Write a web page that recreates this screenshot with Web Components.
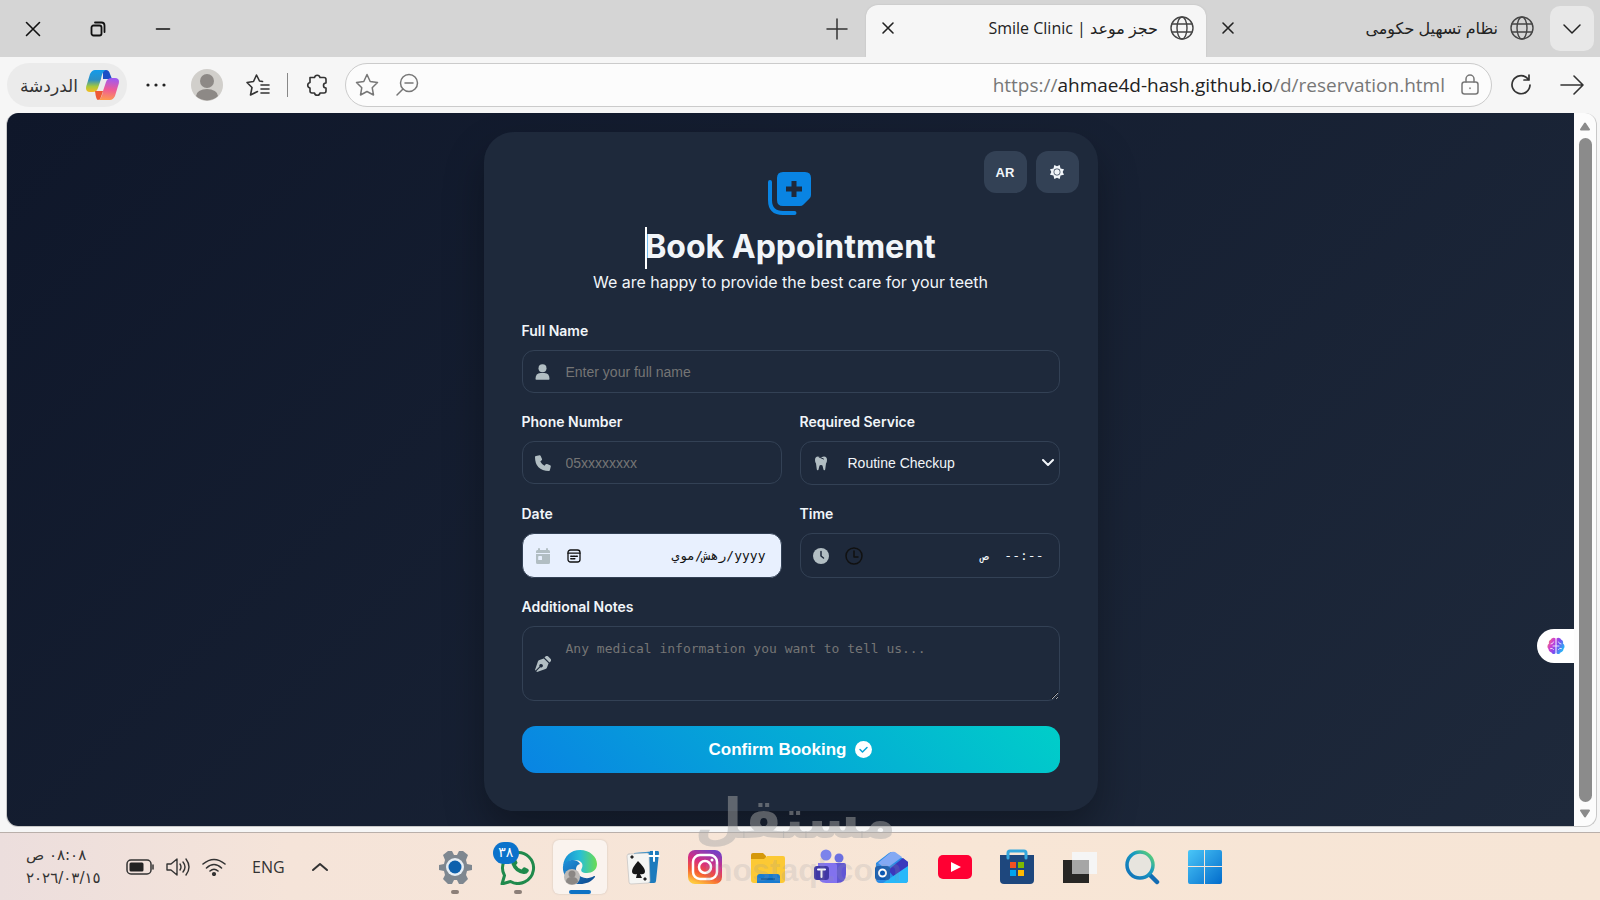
<!DOCTYPE html>
<html lang="ar">
<head>
<meta charset="utf-8">
<meta name="viewport" content="width=device-width, initial-scale=1">
<title>حجز موعد | Smile Clinic</title>
<style>
  body {
    margin: 0;
    min-height: 100vh;
    display: flex;
    flex-direction: column;
    background: #f6f6f6;
    color: #222;
    font-family: "Open Sans", "Noto Sans", "DejaVu Sans", sans-serif;
  }
</style>
</head>
<body>
<tab-strip>
  <browser-tab active>حجز موعد | Smile Clinic</browser-tab>
  <browser-tab>نظام تسهيل حكومى</browser-tab>
</tab-strip>
<address-toolbar></address-toolbar>
<page-viewport>
  <booking-card></booking-card>
</page-viewport>
<task-bar></task-bar>
<water-mark></water-mark>

<script>
function define(name, html) {
  const template = document.createElement("template");
  template.innerHTML = html;

  customElements.define(
    name,
    class extends HTMLElement {
      constructor() {
        super();
        this.attachShadow({ mode: "open" });
        this.shadowRoot.appendChild(template.content.cloneNode(true));
      }
    }
  );
}

const buttonReset = `
  * { box-sizing: border-box; }
  button {
    display: grid;
    place-items: center;
    padding: 0;
    border: 0;
    background: none;
    color: inherit;
    font: inherit;
  }
  svg {
    display: block;
    fill: none;
    stroke: currentColor;
    stroke-linecap: round;
    stroke-linejoin: round;
  }
`;

define("browser-tab", `
  <style>
    ${buttonReset}
    :host {
      display: flex;
      align-items: center;
      gap: 12px;
      width: 340px;
      height: 52px;
      padding: 0 12px 6px 12px;
      box-sizing: border-box;
      border-radius: 12px 12px 0 0;
      font-size: 16px;
      direction: ltr;
    }
    :host([active]) {
      background: #f6f6f6;
      box-shadow: 0 0 2px #bbb;
    }
    .title {
      flex: 1;
      direction: rtl;
      white-space: nowrap;
      overflow: hidden;
    }
  </style>
  <button aria-label="Close tab">
    <svg width="20" height="20" viewBox="0 0 20 20" stroke-width="1.6"><path d="M5 5l10 10M15 5L5 15"/></svg>
  </button>
  <span class="title"><slot></slot></span>
  <svg width="24" height="24" viewBox="0 0 24 24" stroke="#444" style="stroke:#444" stroke-width="1.4"><circle cx="12" cy="12" r="11"/><ellipse cx="12" cy="12" rx="5" ry="11"/><path d="M2 8h20M2 16h20"/></svg>
`);

define("tab-strip", `
  <style>
    ${buttonReset}
    :host {
      display: flex;
      align-items: flex-end;
      height: 57px;
      padding-right: 6px;
      box-sizing: border-box;
      background: #d5d5d5;
    }
    .window, .add { height: 57px; color: #111; }
    .window { width: 65px; }
    .spacer { flex: 1; }
    .add { width: 58px; color: #333; }
    .more {
      align-self: center;
      width: 44px;
      height: 45px;
      margin-left: 4px;
      border-radius: 10px;
      background: #e8e8e8;
    }
  </style>
  <button class="window" aria-label="Close"><svg width="16" height="16" viewBox="0 0 16 16" stroke-width="1.6"><path d="M1.5 1.5l13 13M14.5 1.5l-13 13"/></svg></button>
  <button class="window" aria-label="Restore"><svg width="16" height="16" viewBox="0 0 16 16" stroke-width="1.8"><rect x="1.5" y="4.500" width="10" height="10" rx="2"/><path d="M5 1.500h6.500a3 3 0 0 1 3 3V11"/></svg></button>
  <button class="window" aria-label="Minimize"><svg width="16" height="16" viewBox="0 0 16 16" stroke-width="1.6"><path d="M1.500 8h13"/></svg></button>
  <span class="spacer"></span>
  <button class="add" aria-label="New tab"><svg width="22" height="22" viewBox="0 0 22 22" stroke-width="1.500"><path d="M11 1v20M1 11h20"/></svg></button>
  <slot></slot>
  <button class="more" aria-label="Tab list"><svg width="20" height="20" viewBox="0 0 20 20" stroke-width="1.500"><path d="M2 6l8 8 8-8"/></svg></button>
`);

define("address-toolbar", `
  <style>
    ${buttonReset}
    :host {
      display: flex;
      align-items: center;
      height: 56px;
      padding: 0 5px 0 7px;
      box-sizing: border-box;
      background: #f6f6f6;
      color: #333;
    }
    .chat {
      display: flex;
      align-items: center;
      justify-content: space-between;
      width: 120px;
      height: 44px;
      padding: 0 8px 0 13px;
      border-radius: 22px;
      background: #ebebeb;
      font-size: 17px;
    }
    .tool { width: 58px; height: 44px; }
    .avatar { width: 44px; }
    .divider { width: 1px; height: 24px; background: #888; }
    .divider + .tool { width: 57px; }
    .address {
      flex: 1;
      display: flex;
      align-items: center;
      gap: 16px;
      height: 44px;
      padding: 0 12px 0 9px;
      border: 1px solid #cbcbcb;
      border-radius: 22px;
      background: #fcfcfc;
      color: #777;
    }
    .url {
      flex: 1;
      color: #777;
      font-size: 19px;
      text-align: right;
      text-decoration: none;
      white-space: nowrap;
    }
    .url b { color: #222; font-weight: 400; }
    .nav { width: 57px; height: 44px; }
    .nav:last-child { width: 46px; }
  </style>
  <button class="chat">الدردشة
    <svg width="33" height="30" viewBox="0 0 33 30" style="stroke:none">
      <defs>
        <linearGradient id="cool" x1="0" y1="0" x2="0" y2="1"><stop offset="0" stop-color="#139bea"/><stop offset=".45" stop-color="#2c8fc4"/><stop offset=".75" stop-color="#a6c83c"/><stop offset="1" stop-color="#f7bd22"/></linearGradient>
        <linearGradient id="warm" x1=".3" y1="0" x2=".2" y2="1"><stop offset="0" stop-color="#a05af0"/><stop offset=".5" stop-color="#ef5b96"/><stop offset="1" stop-color="#ff9e4d"/></linearGradient>
      </defs>
      <path d="M17 0h3q3 0 4 4l2 5h-9z" fill="#1b4fc6"/>
      <path d="M9 0h11c-3 1-4 4-5 9l-3 9c-1 3-3 4-5 4H4c-4 0-5-3-3-8L4 4q2-4 5-4z" fill="url(#cool)"/>
      <path d="M24 30H12c3-1 4-4 5-9l3-9c1-3 3-4 6-4h3c4 0 5 3 3 8l-3 10q-2 4-5 4z" fill="url(#warm)"/>
      <path d="M9 21h8l-2 6q-1 3-3 3t-3-9z" fill="#ee5a35"/>
    </svg>
  </button>
  <button class="tool" aria-label="Menu"><svg width="20" height="6" viewBox="0 0 20 6" style="fill:#222;stroke:none"><circle cx="2" cy="3" r="1.600"/><circle cx="10" cy="3" r="1.600"/><circle cx="18" cy="3" r="1.600"/></svg></button>
  <button class="tool avatar" aria-label="Profile">
    <svg width="32" height="32" viewBox="0 0 32 32" style="stroke:none"><circle cx="16" cy="16" r="16" fill="#d1cfcb"/><circle cx="16" cy="12" r="7" fill="#8d8986"/><path d="M5 27a11 7 0 0 1 22 0 16 16 0 0 1-22 0z" fill="#8d8986"/></svg>
  </button>
  <button class="tool" aria-label="Favorites"><svg width="24" height="24" viewBox="0 0 24 24" stroke-width="1.600"><path d="M13.500 8L10.500 2 7.500 8.500 1 9.500l5 5-1.500 7.500 6-3 1-.5M13.500 8l3 .5M15 12h8M15 16h8M15 20h8"/></svg></button>
  <span class="divider"></span>
  <button class="tool" aria-label="Extensions"><svg width="24" height="24" viewBox="0 0 24 24" stroke-width="1.600"><path d="M5 4.500h4.500a2.800 2.800 0 0 1 5.500 0H19q2 0 2 2V10a2.300 2.300 0 1 0 0 5v3q0 2-2 2h-4a2.800 2.800 0 0 1-5.500 0H7q-2 0-2-2v-3a2.800 2.800 0 0 1 0-5.500z"/></svg></button>
  <div class="address">
    <button aria-label="Add to favorites"><svg width="24" height="24" viewBox="0 0 24 24" stroke-width="1.500"><path d="M12 1.500l3.200 7 7.300 1-5.300 5.200 1.300 7.300-6.500-3.500L5.500 22l1.300-7.300L1.500 9.500l7.300-1z"/></svg></button>
    <button aria-label="Zoom"><svg width="24" height="24" viewBox="0 0 24 24" stroke-width="1.500"><circle cx="14" cy="10" r="8.500"/><path d="M8 16l-6 6M10 10h8"/></svg></button>
    <a class="url" href="#" dir="ltr">https://<b>ahmae4d-hash.github.io</b>/d/reservation.html</a>
    <svg width="18" height="22" viewBox="0 0 18 22" stroke-width="1.500"><rect x="1" y="8" width="16" height="12" rx="2.500"/><path d="M5 8V5a4 4 0 0 1 8 0v3M9 14v.5"/></svg>
  </div>
  <button class="nav" aria-label="Reload"><svg width="22" height="22" viewBox="0 0 22 22" stroke-width="1.700"><path d="M20 11a9 9 0 1 1-3-7l2 2M19 1v5h-5"/></svg></button>
  <button class="nav" aria-label="Go"><svg width="24" height="24" viewBox="0 0 24 24" stroke-width="1.600"><path d="M1 12h22M14 3l9 9-9 9"/></svg></button>
`);

define("page-viewport", `
  <style>
    ${buttonReset}
    :host {
      flex: 1;
      display: flex;
      margin: 0 3px 5px 6px;
      box-sizing: border-box;
      border: 1px solid #c8c8c8;
      border-width: 0 1px 1px 1px;
      border-radius: 12px;
      overflow: hidden;
      background: #fcfcfc;
    }
    .page {
      flex: 1;
      position: relative;
      padding: 19px 0 14px;
      background: linear-gradient(135deg, #0f172a, #1e293b);
    }
    .assistant {
      position: absolute;
      right: 0;
      bottom: 163px;
      width: 37px;
      height: 34px;
      border-radius: 17px 0 0 17px;
      background: #fff;
    }
    .scrollbar {
      display: flex;
      flex-direction: column;
      align-items: center;
      gap: 7px;
      width: 22px;
      padding: 9px 0 8px;
    }
    .thumb { flex: 1; width: 13px; border-radius: 7px; background: #8b8b8b; }
  </style>
  <div class="page">
    <slot></slot>
    <button class="assistant" aria-label="Assistant">
      <svg width="18" height="18" viewBox="0 0 18 18">
        <defs><linearGradient id="b" x1="0" y1="0" x2="1" y2=".5"><stop offset="0" stop-color="#f59052"/><stop offset=".35" stop-color="#d13ed0"/><stop offset=".65" stop-color="#7a4df0"/><stop offset="1" stop-color="#29b1f5"/></linearGradient></defs>
        <path fill="url(#b)" stroke="none" d="M8.500 1.500C7 0 4.500 1 4 2.500 2 3 1.500 5 2 6.500 0 8 0 10.500 1.500 12 1.500 14 3 15 4.500 15.500 5.500 17.500 8 17.500 8.500 16zM9.500 1.500C11 0 13.500 1 14 2.500c2 .5 2.500 2.500 2 4 2 1.500 2 4 .5 5.500 0 2-1.500 3-3 3.500-1 2-3.500 2-4 .5z"/>
        <path stroke="#fff" style="stroke:#fff" stroke-width=".8" d="M4 7q2 0 2.500-2M3.500 11.500q2-1 3 1M6 9h2.500M14 7q-2 0-2.500-2M14.500 11.500q-2-1-3 1M12 9H9.500"/>
      </svg>
    </button>
  </div>
  <div class="scrollbar">
    <svg width="12" height="9" viewBox="0 0 12 9"><path d="M6 1.500l4 6H2z" fill="#8b8b8b" stroke="#8b8b8b" stroke-width="2"/></svg>
    <span class="thumb"></span>
    <svg width="12" height="9" viewBox="0 0 12 9"><path d="M6 7.500l4-6H2z" fill="#8b8b8b" stroke="#8b8b8b" stroke-width="2"/></svg>
  </div>
`);

define("form-field", `
  <style>
    :host { display: block; }
    .label { display: block; margin-bottom: 9px; }
    .box { position: relative; display: grid; }
    .icon, .end {
      position: absolute;
      top: 0;
      bottom: 0;
      display: grid;
      align-items: center;
      pointer-events: none;
    }
    .icon { left: 13px; color: #b2bec3; }
    .end { right: 6px; color: #f1f5f9; }
  </style>
  <div class="label"><slot name="label"></slot></div>
  <div class="box">
    <slot></slot>
    <span class="icon"><slot name="icon"></slot></span>
    <span class="end"><slot name="end"></slot></span>
  </div>
`);

define("booking-card", `
  <style>
    ${buttonReset}
    :host {
      display: block;
      position: relative;
      width: 614px;
      max-width: 100%;
      margin: 0 auto;
      padding: 38px;
      box-sizing: border-box;
      border-radius: 30px;
      background: #1e293b;
      box-shadow: 0 20px 40px rgba(0, 0, 0, .3);
      color: #f1f5f9;
      font-family: Inter, sans-serif;
    }
    .controls { position: absolute; top: 19px; right: 19px; display: flex; gap: 9px; }
    .controls button {
      width: 43px;
      height: 42px;
      border-radius: 12px;
      background: #334155;
      font: bold 13px "Liberation Sans", sans-serif;
    }
    header { display: flex; flex-direction: column; align-items: center; margin-bottom: 26px; }
    h1 { position: relative; margin: 10px 0 0; font-size: 32px; line-height: 44px; font-weight: 700; }
    .caret { position: absolute; left: 0; top: 2px; width: 2px; height: 42px; background: #fff; }
    p { margin: 0; font-size: 16px; line-height: 26px; }
    form { display: grid; grid-template-columns: 1fr 1fr; gap: 19px 18px; }
    .wide { grid-column: 1 / -1; }
    label { display: block; font-size: 14px; line-height: 20px; font-weight: 600; }
    input, select, textarea {
      width: 100%;
      height: 43px;
      margin: 0;
      padding: 0 16px 0 43px;
      border: 1px solid #334155;
      border-radius: 12px;
      background: transparent;
      color: #f1f5f9;
      font: 14px "Liberation Sans", sans-serif;
      outline: 0;
    }
    select { height: 44px; appearance: none; padding-left: 47px; }
    option { background: #1e293b; }
    input[dir] { height: 45px; padding: 0 15px; font: 13px "DejaVu Sans Mono", "DejaVu Sans", monospace; }
    #date { background: #e8f0fe; color: #111; }
    ::placeholder { color: #757575; opacity: 1; }
    textarea {
      display: block;
      height: 75px;
      padding-top: 14px;
      font: 13px "DejaVu Sans Mono", monospace;
      resize: vertical;
    }
    svg { fill: currentColor; stroke: none; }
    .pair { display: flex; align-items: center; gap: 16px; }
    .picker { fill: none; stroke: #111; stroke-width: 1.500; }
    .submit {
      display: flex;
      align-items: center;
      justify-content: center;
      gap: 9px;
      height: 47px;
      margin-top: 6px;
      border-radius: 14px;
      background: linear-gradient(45deg, #0984e3, #00cec9);
      color: #fff;
      font: bold 17px "Liberation Sans", sans-serif;
    }
  </style>
  <div class="controls">
    <button>AR</button>
    <button aria-label="Theme"><svg width="14" height="14" viewBox="0 0 14 14"><path fill-rule="evenodd" d="M4.300 0L7 1.300 9.700 0l.8 3.500L14 4.300 12.700 7 14 9.700l-3.500.8-.8 3.500L7 12.700 4.300 14l-.8-3.500L0 9.700 1.300 7 0 4.300l3.500-.8zM7 3.600a3.400 3.400 0 1 0 0 6.800 3.400 3.400 0 0 0 0-6.800z"/><circle cx="7" cy="7" r="2.700"/></svg></button>
  </div>
  <header>
    <svg width="46" height="45" viewBox="0 0 46 45" color="#0984e3">
      <path fill-rule="evenodd" d="M15 2h22q6 0 6 6v17q0 2-1.500 3.500l-6 6Q34 36 32 36H15q-6 0-6-6V8q0-6 6-6zm8.500 9v5.500H18v5h5.500V27h5v-5.500H34v-5h-5.500V11z"/>
      <path d="M2 12v18q0 13 13 13h11.500" style="fill:none;stroke:#0984e3;stroke-width:4;stroke-linecap:round"/>
    </svg>
    <h1><span class="caret"></span>Book Appointment</h1>
    <p>We are happy to provide the best care for your teeth</p>
  </header>
  <form>
    <form-field class="wide">
      <label slot="label" for="name">Full Name</label>
      <input id="name" type="text" placeholder="Enter your full name">
      <svg slot="icon" width="15" height="16" viewBox="0 0 15 16"><circle cx="7.500" cy="4.200" r="4"/><path d="M.5 15q0-6 5-6h4q5 0 5 6 0 .8-.8.800H1.300Q.5 15.800.5 15z"/></svg>
    </form-field>
    <form-field>
      <label slot="label" for="phone">Phone Number</label>
      <input id="phone" type="tel" placeholder="05xxxxxxxx">
      <svg slot="icon" width="16" height="16" viewBox="0 0 16 16"><path d="M4.500.2q.8-.2 1.200.7l1.300 3q.3.800-.3 1.400L5.300 6.500q1.400 2.800 4.200 4.200l1.200-1.400q.6-.6 1.400-.3l3 1.300q.9.400.7 1.200L15 14.700Q14.700 16 14 16 0 15.500 0 2q0-.8 1-1z"/></svg>
    </form-field>
    <form-field>
      <label slot="label" for="service">Required Service</label>
      <select id="service"><option>Routine Checkup</option></select>
      <svg slot="icon" width="16" height="16" viewBox="0 0 16 16"><path d="M5 1.500q1 0 3 1 2-1 3-1 3 0 3 3.500 0 2-1 3.500l-.8 6q-.2 1-1 .8-.7 0-.8-1l-.8-3.300Q9.500 10 8 10q-1.500 0-1.600 1l-.8 3.300q-.1 1-.8 1-.8.200-1-.8L3 8.500Q2 7 2 5q0-3.500 3-3.500z"/><path d="M6 2l4.500 2" style="stroke:#1e293b"/></svg>
      <svg slot="end" width="12" height="8" viewBox="0 0 12 8"><path d="M1 1l5 5 5-5" style="fill:none;stroke:currentColor;stroke-width:2"/></svg>
    </form-field>
    <form-field>
      <label slot="label" for="date">Date</label>
      <input id="date" type="text" dir="rtl" value="yyyy/رهش/موي">
      <span slot="icon" class="pair">
        <svg width="16" height="16" viewBox="0 0 16 16"><path d="M4 0q1 0 1 1v1h6V1q0-1 1-1t1 1v1h.5Q15 2 15 3.500V5H1V3.500Q1 2 2.500 2H3V1q0-1 1-1zM1 6h14v8.500q0 1.500-1.500 1.500h-11Q1 16 1 14.500zm3 2q-.8 0-.8 1v2.500q0 .5.800.5h2.500q.5 0 .5-.5V9q0-1-.5-1z" fill-rule="evenodd"/></svg>
        <svg class="picker" width="14" height="14" viewBox="0 0 14 14"><rect x="1" y="1" width="12" height="12" rx="2.500" stroke-width="1.300"/><path d="M1 4.200h12" stroke-width="1.200"/><path d="M3.800 7.300h1.500M6.300 7.300h1.500M8.800 7.300h1.500M3.800 9.800h1.500M6.300 9.800h1.500"/></svg>
      </span>
    </form-field>
    <form-field>
      <label slot="label" for="time">Time</label>
      <input id="time" type="text" dir="rtl" value="--:--  ص">
      <span slot="icon" class="pair">
        <svg width="16" height="16" viewBox="0 0 16 16"><circle cx="8" cy="8" r="8"/><path d="M8 3.500V8l2.500 2" style="fill:none;stroke:#1e293b;stroke-width:1.500"/></svg>
        <svg class="picker" width="18" height="18" viewBox="0 0 18 18"><circle cx="9" cy="9" r="8"/><path d="M9 4v6h4"/></svg>
      </span>
    </form-field>
    <form-field class="wide">
      <label slot="label" for="notes">Additional Notes</label>
      <textarea id="notes" placeholder="Any medical information you want to tell us..."></textarea>
      <svg slot="icon" width="16" height="16" viewBox="0 0 16 16"><path fill-rule="evenodd" d="M11 0q1-.5 2 .3L15.700 3q.8 1 .3 2l-1.500 1.500-5-5zM8.800 2.400l4.800 4.800L12 11.500q-.4 1.200-1.500 1.600L2 16l-.7-.7 4-4a1.800 1.800 0 1 0-.8-.8l-4 4L0 14l2.900-8.500Q3.300 4.400 4.500 4z"/></svg>
    </form-field>
    <button class="submit wide">Confirm Booking
      <svg width="17" height="17" viewBox="0 0 17 17"><circle cx="8.500" cy="8.500" r="8.500"/><path d="M5 8.500l2.500 2.500L12 6.500" style="fill:none;stroke:#06a5d8;stroke-width:1.500"/></svg>
    </button>
  </form>
`);

define("task-app", `
  <style>
    ${buttonReset}
    :host { display: grid; justify-items: center; }
    button { position: relative; width: 54px; height: 54px; border-radius: 6px; }
    :host([active]) button { background: #faf3ee; box-shadow: 0 0 2px #cbbdb4; }
    :host([running]) button::after {
      content: "";
      position: absolute;
      bottom: 0;
      width: 8px;
      height: 4px;
      border-radius: 2px;
      background: #8c7f78;
    }
    :host([active]) button::after { width: 22px; background: #0f72c4; }
    ::slotted(svg) { display: block; width: 36px; height: 36px; }
    ::slotted(.badge) {
      position: absolute;
      left: 2px;
      top: 2px;
      width: 26px;
      height: 22px;
      border-radius: 11px;
      background: #0b72cb;
      color: #fff;
      font-size: 14px;
      line-height: 20px;
      text-align: center;
    }
  </style>
  <button><slot></slot></button>
`);

define("task-bar", `
  <style>
    ${buttonReset}
    :host {
      display: flex;
      align-items: center;
      height: 68px;
      box-sizing: border-box;
      border-top: 1px solid #b9afaa;
      background: linear-gradient(90deg, #ecdedd, #f5e4d9 18%, #f8e6d6 60%, #f6e5d6);
      color: #333;
    }
    .tray { display: flex; align-items: center; width: 424px; padding-left: 26px; }
    .clock { width: 100px; font: 15px/23px "DejaVu Sans", sans-serif; white-space: nowrap; }
    .clock span { display: block; width: max-content; }
    .status { display: flex; align-items: center; gap: 12px; }
    .lang { margin: 0 26px; font-size: 16px; }
    nav { display: grid; grid-template-columns: repeat(13, 1fr); width: 812px; }
    nav svg { stroke: none; }
  </style>
  <div class="tray">
    <div class="clock"><span dir="rtl">٠٨:٠٨ ص</span><span dir="ltr">٢٠٢٦/٠٣/١٥</span></div>
    <div class="status">
      <svg width="28" height="16" viewBox="0 0 28 16" stroke-width="1.500"><rect x="1" y="1" width="24" height="14" rx="4"/><rect x="3.500" y="3.500" width="14" height="9" rx="1.500" style="fill:#222;stroke:none"/><path d="M27 6v4"/></svg>
      <svg width="24" height="20" viewBox="0 0 24 20" stroke-width="1.400"><path d="M1 7v6h4l6 5V2L5 7zM14 7q2 3 0 6M17 5q4 5 0 10M20 2q6 8 0 16"/></svg>
      <svg width="24" height="18" viewBox="0 0 24 18" stroke-width="1.600"><path d="M1 6q11-9 22 0M4.500 10q7.500-7 15 0M8 13q4-3.500 8 0"/><circle cx="12" cy="16" r="1.300" fill="#333"/></svg>
    </div>
    <span class="lang">ENG</span>
    <button aria-label="Show hidden icons"><svg width="18" height="10" viewBox="0 0 18 10" stroke-width="2"><path d="M2 8l7-6 7 6"/></svg></button>
  </div>
  <nav>
    <task-app running>
      <svg viewBox="0 0 36 36"><path d="M11 2h4l2 4h3l2-4h4l5 4-2 5 1 4 5 1v5l-5 1-1 4 2 4-5 5h-4l-2-4h-3l-2 4h-4l-5-5 2-4-1-4-5-1v-5l5-1 1-4-2-5z" fill="#7e8790"/><circle cx="18" cy="18" r="9" fill="#e7eef4"/><circle cx="18" cy="18" r="6.500" fill="#0e61ad"/></svg>
    </task-app>
    <task-app running>
      <svg viewBox="0 0 36 36"><path d="M2 35l2.500-8.500a15.500 15.500 0 1 1 6 6z" fill="#f7e9dd" stroke="#1f8a4c" stroke-width="3"/><path d="M13 10q1.500-1.500 3 .5l1.500 3q0 1-1.500 2.500 1.500 3 5.500 4.500l2-2q.8-.5 1.600 0l3 1.500q1.400 1 .4 2.500-1.800 3-5 2.500-9-1.500-12-10-.6-3 1.500-5z" fill="#1f8a4c"/></svg>
      <span class="badge">٣٨</span>
    </task-app>
    <task-app active running>
      <svg viewBox="0 0 36 36">
        <defs><linearGradient id="e1"><stop stop-color="#168bd4"/><stop offset=".5" stop-color="#28bfd6"/><stop offset="1" stop-color="#6bdc51"/></linearGradient><linearGradient id="e2" x2="1" y2="1"><stop stop-color="#1f92dc"/><stop offset="1" stop-color="#0e478c"/></linearGradient></defs>
        <path d="M1 17C2 7 9 1 18 1c10 0 17 7 17 14 0 6-5 9-10 9-5 0-7-2-5-5 2-5-2-8-7-8-6 0-10 3-12 6z" fill="url(#e1)"/>
        <path d="M1 17c3-7 14-8 17-2-4 1-5 5-3 9 3 5 11 7 17 3 1 0 1 0 1 1-4 5-9 7-15 7C8 35 0 27 1 17z" fill="url(#e2)"/>
        <circle cx="10" cy="28" r="8" fill="#bdbab7"/><circle cx="10" cy="25" r="3.500" fill="#8b8784"/><path d="M4 33q0-5 6-5t6 5q-6 5-12 0z" fill="#8b8784"/>
      </svg>
    </task-app>
    <task-app>
      <svg viewBox="0 0 36 36"><path d="M9 4l23-2-4 32-18-2z" fill="#2388ca"/><path d="M25 2h8q1 0 1 2l-3 28q0 2-2 2h-6z" fill="#1d7bbd"/><path d="M4 5l18-1q2 0 2 2l1 26q0 2-2 2L6 35q-2 0-2-2L2 7q0-2 2-2z" fill="#f5f5f3" stroke="#bbb" stroke-width=".6"/><path d="M13 12q7 7 7 10 0 4-5 3l2 4h-6l1-4q-5 1-5-3 0-3 6-10z" fill="#161616"/><path d="M5 8l2-2 2 2-2 2zM18 30l2-2 2 2-2 2z" fill="#222"/><path d="M29 2v10M24 7h10" stroke="#fff" stroke-width="2"/></svg>
    </task-app>
    <task-app>
      <svg viewBox="0 0 36 36"><defs><linearGradient id="ig" x1=".3" y1="1" x2=".7" y2="0"><stop stop-color="#ffc83d"/><stop offset=".3" stop-color="#f55a31"/><stop offset=".6" stop-color="#d62d82"/><stop offset="1" stop-color="#7440c5"/></linearGradient></defs><rect x="1" y="1" width="34" height="34" rx="7" fill="url(#ig)"/><rect x="6" y="6" width="24" height="24" rx="7" fill="none" stroke="#fff" stroke-width="2.500"/><circle cx="18" cy="18" r="6" fill="none" stroke="#fff" stroke-width="2.500"/><circle cx="25" cy="11" r="1.500" fill="#fff"/></svg>
    </task-app>
    <task-app>
      <svg viewBox="0 0 36 36"><path d="M1 6q0-2 2-2h10l3 3v6H1z" fill="#d5980b"/><path d="M1 10h13l3-3h16q2 0 2 2v22q0 3-3 3H4q-3 0-3-3z" fill="#fcc934"/><path d="M7 34v-6q0-3 3-3h17q3 0 3 3v6z" fill="#187bd0"/><path d="M11 29h14v2H11z" fill="#0b5fa9"/></svg>
    </task-app>
    <task-app>
      <svg viewBox="0 0 36 36"><circle cx="14" cy="6" r="5.500" fill="#7b83eb"/><circle cx="27" cy="9" r="4.500" fill="#6b6fe0"/><path d="M20 14h12q2 0 2 2v9q0 9-9 9z" fill="#6156d4"/><path d="M6 14h16q3 0 3 3v17H14q-8 0-8-9z" fill="#8272ee"/><rect x="2" y="17" width="15" height="14" rx="3" fill="#3f37a5"/><path d="M6 20.500h7M9.500 20.500V28" stroke="#fff" stroke-width="2"/></svg>
    </task-app>
    <task-app>
      <svg viewBox="0 0 36 36"><path d="M2 14L15 4q3-2 6 0l13 9v18q0 3-3 3H6q-4 0-4-4z" fill="#278be7"/><path d="M4 14L16 4q2-2 5-1l7 5-16 12z" fill="#83a9f4"/><path d="M14 21l15-12 5 4v5L20 28z" fill="#3b38bd"/><path d="M34 17v14q0 3-3 3H9z" fill="#27b8fa"/><rect x="1" y="17" width="15" height="14" rx="3" fill="#0b58b2"/><circle cx="8.500" cy="24" r="3.500" fill="none" stroke="#fff" stroke-width="2"/></svg>
    </task-app>
    <task-app>
      <svg viewBox="0 0 36 36"><rect x="1" y="6" width="34" height="24" rx="5" fill="#ff0033"/><path d="M14 13l10 5-10 5z" fill="#fff"/></svg>
    </task-app>
    <task-app>
      <svg viewBox="0 0 36 36"><path d="M1 6h34v25q0 4-4 4H5q-4 0-4-4z" fill="#1e477d"/><path d="M9 9V4q0-2 2-2h14q2 0 2 2v5" fill="none" stroke="#35a7dd" stroke-width="3"/><path d="M11 13h6v6h-6z" fill="#f25022"/><path d="M19 13h6v6h-6z" fill="#7fba00"/><path d="M11 21h6v6h-6z" fill="#00a4ef"/><path d="M19 21h6v6h-6z" fill="#ffb900"/></svg>
    </task-app>
    <task-app>
      <svg viewBox="0 0 36 36"><path d="M1 11h26v23H1z" fill="#282725"/><path d="M10 3h25v22H10z" fill="#f5f5f5"/><path d="M10 11h17v14H10z" fill="#a6a6a6"/></svg>
    </task-app>
    <task-app>
      <svg viewBox="0 0 36 36"><defs><linearGradient id="s" x1="0" y1="1" x2="1" y2="0"><stop stop-color="#116eb9"/><stop offset=".6" stop-color="#179ac1"/><stop offset="1" stop-color="#6cdb65"/></linearGradient></defs><path d="M25 25l8 8" stroke="#126cb3" stroke-width="4.500"/><circle cx="16" cy="16" r="13" fill="#e7e4de" stroke="url(#s)" stroke-width="3.500"/></svg>
    </task-app>
    <task-app>
      <svg viewBox="0 0 36 36"><defs><linearGradient id="w" gradientUnits="userSpaceOnUse" x1="0" y1="0" x2="36" y2="36"><stop stop-color="#4cc9f9"/><stop offset="1" stop-color="#0069ca"/></linearGradient></defs><path d="M1 3q0-2 2-2h14v16H1zM18 1h15q2 0 2 2v14H18zM1 18h16v17H3q-2 0-2-2zM18 18h17v15q0 2-2 2H18z" fill="url(#w)"/></svg>
    </task-app>
  </nav>
`);

define("water-mark", `
  <style>
    :host {
      position: absolute;
      left: 50%;
      bottom: 14px;
      width: 192px;
      margin-left: -96px;
      text-align: center;
      white-space: nowrap;
      pointer-events: none;
    }
    div { font: bold 55px/70px "DejaVu Sans", sans-serif; color: rgba(170, 170, 170, .48); }
    span { display: block; font: bold 32px/32px "Liberation Sans", sans-serif; color: rgba(150, 150, 160, .2); }
  </style>
  <div dir="rtl">مستقل</div>
  <span dir="ltr">mostaql.com</span>
`);

document.querySelector("booking-card").shadowRoot
  .querySelector("form")
  .addEventListener("submit", (ev) => ev.preventDefault());
</script>
</body>
</html>
